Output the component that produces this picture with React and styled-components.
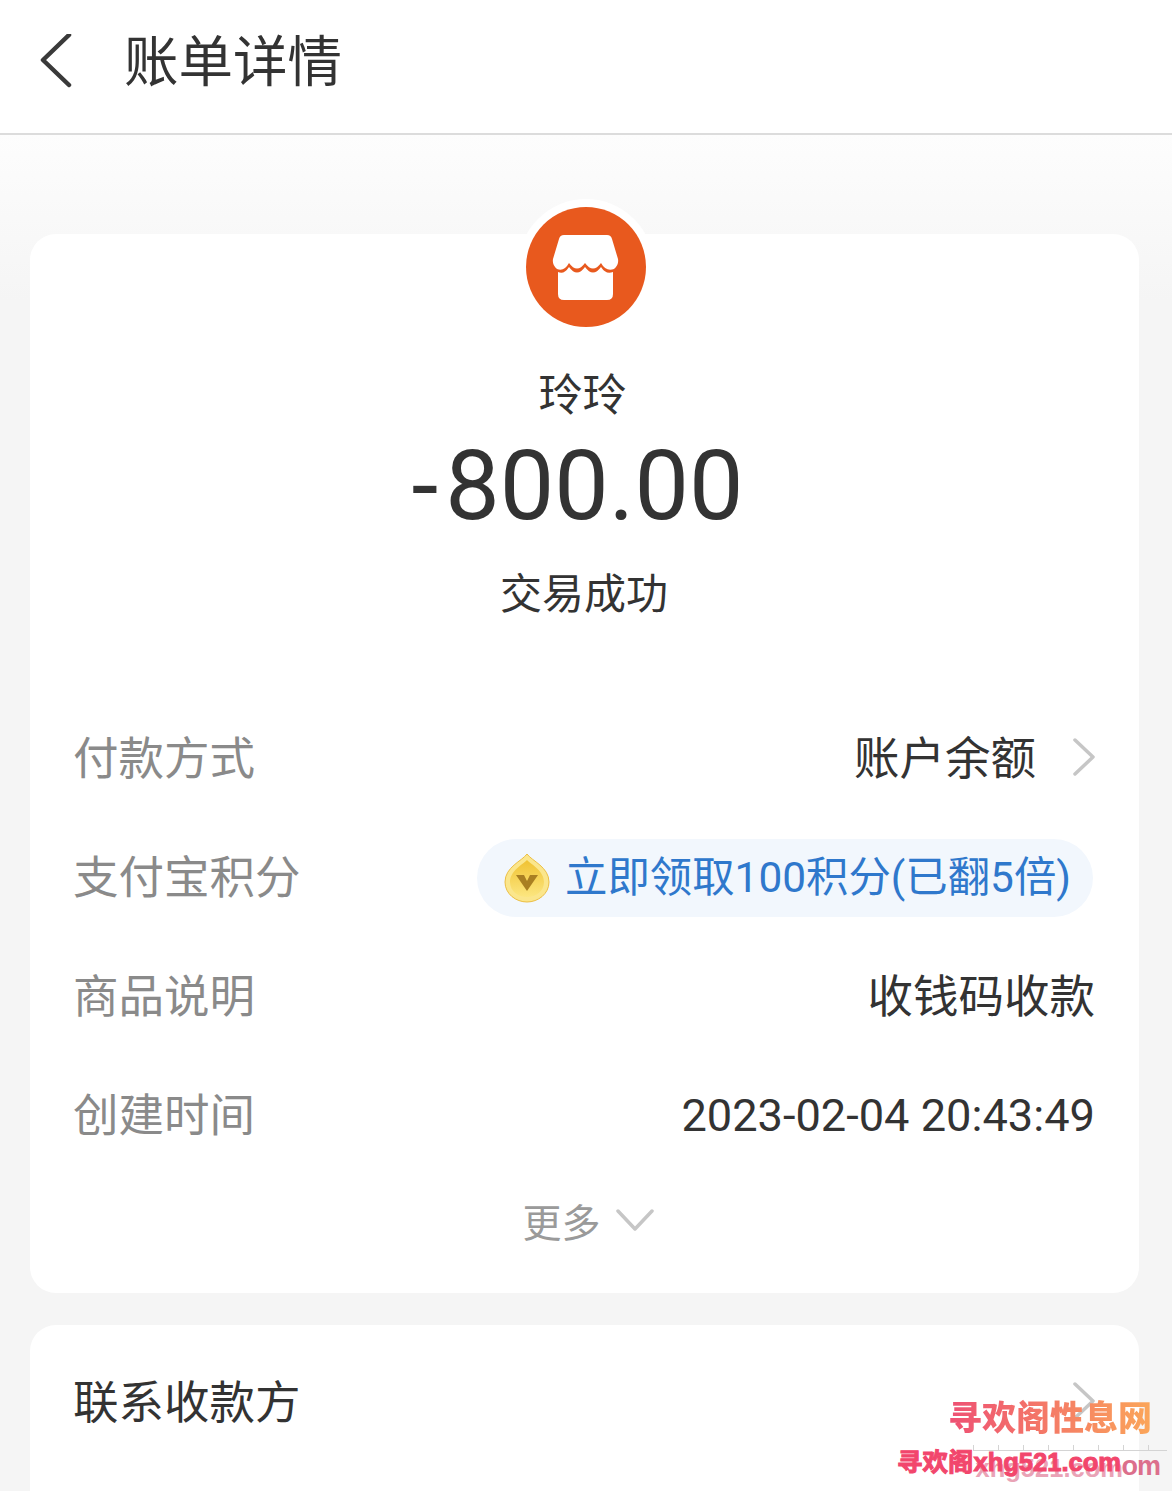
import React from 'react';
import styled, { createGlobalStyle } from 'styled-components';

const cjk = `Roboto, "Noto Sans CJK SC", sans-serif`;

const GlobalStyle = createGlobalStyle`
  html, body {
    margin: 0;
    padding: 0;
    background: #f6f6f6;
  }
`;

const Page = styled.div`
  position: relative;
  width: 1172px;
  height: 1491px;
  overflow: hidden;
  font-family: ${cjk};
  background: linear-gradient(#fdfdfd 135px, #f5f5f5 300px);
`;

const Header = styled.header`
  display: flex;
  align-items: center;
  box-sizing: border-box;
  height: 135px;
  padding: 0 0 10px 38px;
  gap: 50px;
  background: #fff;
  border-bottom: 2px solid #dcdcdc;
`;

const Title = styled.h1`
  margin: 0;
  font-size: 54.5px;
  font-weight: 400;
  line-height: 60px;
  color: #333;
`;

const Content = styled.main`
  display: flex;
  flex-direction: column;
  gap: 32px;
  padding: 99px 33px 0 30px;
`;

const Card = styled.section`
  position: relative;
  background: #fff;
  border-radius: 26px;
`;

const Summary = styled.div`
  display: flex;
  flex-direction: column;
  align-items: center;
  padding: 0 0 70px 2px;
`;

const AvatarHalo = styled.div`
  display: flex;
  align-items: center;
  justify-content: center;
  width: 136px;
  height: 136px;
  margin-top: -35px;
  border-radius: 50%;
  background: #fff;
`;

const Merchant = styled.div`
  margin: 31px 6px 0 0;
  font-size: 44px;
  line-height: 60px;
  color: #333;
`;

const Amount = styled.div`
  margin: 4px 16px 0 0;
  font-size: 97px;
  line-height: 112px;
  color: #333;
`;

const Minus = styled.span`
  margin-right: 7px;
`;

const Status = styled.div`
  margin: 23px 3px 0 0;
  font-size: 42px;
  line-height: 60px;
  color: #333;
`;

const Row = styled.div`
  display: flex;
  align-items: center;
  justify-content: space-between;
  height: 119px;
  padding: 0 44px 0 43px;
`;

const Label = styled.span`
  font-size: 45.5px;
  color: ${(p) => (p.$strong ? '#333' : '#8a8a8a')};
`;

const Value = styled.span`
  display: flex;
  align-items: center;
  gap: 37px;
  font-size: 45.5px;
  color: #333;
`;

const DateValue = styled(Value)`
  margin-top: 8px;
  font-size: 45.2px;
`;

const Pill = styled.div`
  display: flex;
  align-items: center;
  gap: 15px;
  box-sizing: border-box;
  width: 616px;
  height: 78px;
  margin: 9px 2px 0 0;
  padding: 0 0 0 27px;
  border-radius: 39px;
  background: #f2f7fd;
  font-size: 42.4px;
  white-space: nowrap;
  color: #2f78cc;
`;

const PillText = styled.span`
  margin-top: -10px;
`;

const More = styled.div`
  display: flex;
  align-items: center;
  justify-content: center;
  gap: 15px;
  height: 60px;
  margin-top: 19px;
  padding: 0 0 43px 7px;
  font-size: 39px;
  color: #9a9a9a;
`;

const ContactCard = styled(Card)`
  height: 200px;
`;

const ContactRow = styled(Row)`
  height: 148px;
`;

const ChevronSvg = styled.svg`
  margin-top: 4px;
`;

const Watermark = styled.div`
  position: absolute;
  right: 0;
  bottom: 0;
  width: 275px;
  height: 107px;
`;

const WatermarkTitle = styled.div`
  position: absolute;
  top: 11px;
  left: 51px;
  font-family: "Noto Sans CJK SC", serif;
  font-size: 34px;
  font-weight: 900;
  line-height: 42px;
  white-space: nowrap;
  background: linear-gradient(90deg, #ee5074, #fba659);
  -webkit-background-clip: text;
  background-clip: text;
  color: transparent;
`;

const WatermarkRuler = styled.div`
  position: absolute;
  top: 61px;
  left: 76px;
  width: 194px;
  height: 5px;
  border-bottom: 1px solid #d4d4d4;
  background: repeating-linear-gradient(90deg, #d4d4d4 0 1px, transparent 1px 25px);
`;

const WatermarkUrl = styled.div`
  position: absolute;
  top: 62px;
  left: 0;
  font-family: "Liberation Sans", "Noto Sans CJK SC", sans-serif;
  font-size: 25.5px;
  font-weight: 700;
  line-height: 32px;
  white-space: nowrap;
  color: #f2466c;
  -webkit-text-stroke: 1px #f2466c;
`;

const WatermarkLatin = styled.span`
  text-shadow: 2px 6px 0 #e9a3b6;
`;

const WatermarkGhost = styled.span`
  position: absolute;
  top: 66px;
  right: 12px;
  font-family: "Liberation Sans", sans-serif;
  font-size: 27px;
  font-weight: 700;
  line-height: 32px;
  letter-spacing: -1px;
  color: #dc6f8c;
`;

const Back = () => (
  <svg width="36" height="56" viewBox="0 0 36 56" fill="none">
    <path d="M31 1 L5 26 L31 51" stroke="#3a3a3a" strokeWidth="4.5" strokeLinecap="round" strokeLinejoin="round" />
  </svg>
);

const Chevron = () => (
  <ChevronSvg width="22" height="38" viewBox="0 0 22 38" fill="none">
    <path d="M2 2 L20 19 L2 36" stroke="#c6c6c6" strokeWidth="3.5" strokeLinecap="round" strokeLinejoin="round" />
  </ChevronSvg>
);

const ChevronDown = () => (
  <svg width="38" height="24" viewBox="0 0 38 24" fill="none">
    <path d="M2 3 L19 21 L36 3" stroke="#c6c6c6" strokeWidth="3.5" strokeLinecap="round" strokeLinejoin="round" />
  </svg>
);

const ShopIcon = () => (
  <svg width="120" height="120" viewBox="0 0 120 120">
    <circle cx="60" cy="60" r="60" fill="#e8591e" />
    <path
      d="M38 28 H81 Q85 28 86 32 L92 52 Q93 58 88 62 Q80 65 75 56 Q67 67 59 56 Q51 67 43 56 Q38 65 31 62 Q26 58 27 52 L33 32 Q34 28 38 28 Z"
      fill="#fff"
    />
    <path
      d="M32 65 Q38 68 43 60 Q51 71 59 60 Q67 71 75 60 Q80 68 87 65 V87 Q87 93 81 93 H38 Q32 93 32 87 Z"
      fill="#fff"
    />
  </svg>
);

const CoinIcon = () => (
  <svg width="46" height="50" viewBox="0 0 46 50">
    <defs>
      <linearGradient id="coin" x1="0" y1="0" x2="0" y2="1">
        <stop offset="0" stopColor="#f0c232" />
        <stop offset="1" stopColor="#fce680" />
      </linearGradient>
    </defs>
    <path d="M23 1 C28 8 45 14 45 29 C45 41 34 49 23 49 C12 49 1 41 1 29 C1 14 18 8 23 1 Z" fill="#fbe68c" stroke="#ecbf45" />
    <path d="M23 7 C28 12 40 18 40 29 C40 38 32 44 23 44 C14 44 6 38 6 29 C6 18 18 12 23 7 Z" fill="url(#coin)" />
    <path d="M12 22 H20 L23 28 L26 22 H34 L23 38 Z" fill="#a97f22" />
  </svg>
);

export default function App() {
  return (
    <Page>
      <GlobalStyle />
      <Header>
        <Back />
        <Title>账单详情</Title>
      </Header>
      <Content>
        <Card>
          <Summary>
            <AvatarHalo>
              <ShopIcon />
            </AvatarHalo>
            <Merchant>玲玲</Merchant>
            <Amount>
              <Minus>-</Minus>800.00
            </Amount>
            <Status>交易成功</Status>
          </Summary>
          <Row>
            <Label>付款方式</Label>
            <Value>
              账户余额
              <Chevron />
            </Value>
          </Row>
          <Row>
            <Label>支付宝积分</Label>
            <Pill>
              <CoinIcon />
              <PillText>立即领取100积分(已翻5倍)</PillText>
            </Pill>
          </Row>
          <Row>
            <Label>商品说明</Label>
            <Value>收钱码收款</Value>
          </Row>
          <Row>
            <Label>创建时间</Label>
            <DateValue>2023-02-04 20:43:49</DateValue>
          </Row>
          <More>
            更多
            <ChevronDown />
          </More>
        </Card>
        <ContactCard>
          <ContactRow>
            <Label $strong>联系收款方</Label>
            <Chevron />
          </ContactRow>
        </ContactCard>
      </Content>
      <Watermark>
        <WatermarkRuler />
        <WatermarkGhost>om</WatermarkGhost>
        <WatermarkTitle>寻欢阁性息网</WatermarkTitle>
        <WatermarkUrl>
          寻欢阁<WatermarkLatin>xhg521.com</WatermarkLatin>
        </WatermarkUrl>
      </Watermark>
    </Page>
  );
}
